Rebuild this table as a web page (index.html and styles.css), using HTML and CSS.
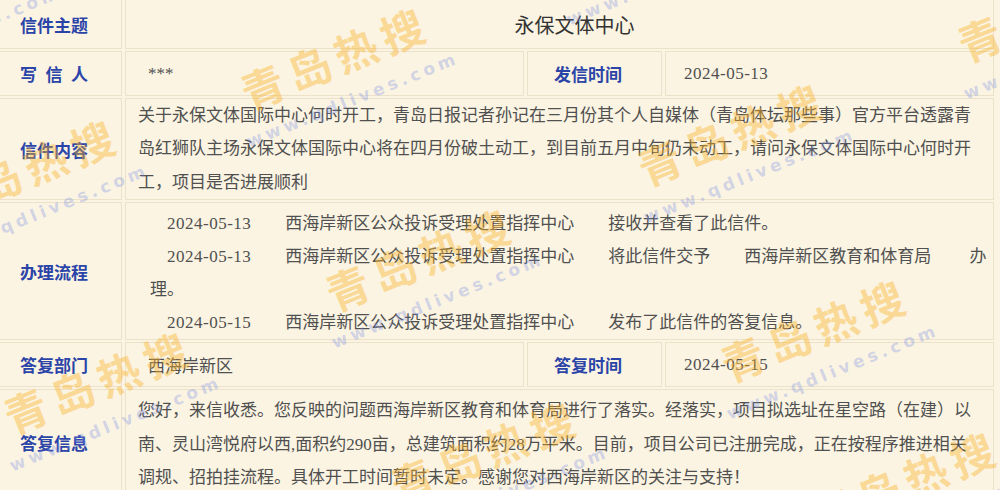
FILE: index.html
```html
<!DOCTYPE html>
<html lang="zh-CN">
<head>
<meta charset="utf-8">
<title>信件详情</title>
<link rel="stylesheet" href="styles.css">
</head>
<body>
<div class="page">
  <table class="letter">
    <colgroup>
      <col class="c-label">
      <col class="c-value">
      <col class="c-label2">
      <col class="c-value2">
    </colgroup>
    <tr class="row-title">
      <th><span class="lbl">信件主题</span></th>
      <td colspan="3" class="title">永保文体中心</td>
    </tr>
    <tr class="row-short">
      <th><span class="lbl">写 信 人</span></th>
      <td class="val">***</td>
      <th><span class="lbl">发信时间</span></th>
      <td class="val-r"><span class="date">2024-05-13</span></td>
    </tr>
    <tr>
      <th><span class="lbl">信件内容</span></th>
      <td colspan="3" class="body">关于永保文体国际中心何时开工，青岛日报记者孙记在三月份其个人自媒体（青岛体坛那些事）官方平台透露青岛红狮队主场永保文体国际中心将在四月份破土动工，到目前五月中旬仍未动工，请问永保文体国际中心何时开工，项目是否进展顺利</td>
    </tr>
    <tr>
      <th><span class="lbl">办理流程</span></th>
      <td colspan="3" class="flow">
        <p>　<span class="date">2024-05-13</span>　　西海岸新区公众投诉受理处置指挥中心　　接收并查看了此信件。</p>
        <p>　<span class="date">2024-05-13</span>　　西海岸新区公众投诉受理处置指挥中心　　将此信件交予　　西海岸新区教育和体育局　　 办理。</p>
        <p>　<span class="date">2024-05-15</span>　　西海岸新区公众投诉受理处置指挥中心　　发布了此信件的答复信息。</p>
      </td>
    </tr>
    <tr class="row-short">
      <th><span class="lbl">答复部门</span></th>
      <td class="val">西海岸新区</td>
      <th><span class="lbl">答复时间</span></th>
      <td class="val-r"><span class="date">2024-05-15</span></td>
    </tr>
    <tr>
      <th><span class="lbl">答复信息</span></th>
      <td colspan="3" class="body reply">您好，来信收悉。您反映的问题西海岸新区教育和体育局进行了落实。经落实，项目拟选址在星空路（在建）以南、灵山湾悦府以西,面积约290亩，总建筑面积约28万平米。目前，项目公司已注册完成，正在按程序推进相关调规、招拍挂流程。具体开工时间暂时未定。感谢您对西海岸新区的关注与支持！</td>
    </tr>
  </table>

  <div class="watermarks" aria-hidden="true">
    <div class="wm wm-1"><span class="cn">青岛热搜</span><span class="en">www.qdlives.com</span></div>
    <div class="wm wm-2"><span class="cn">青岛热搜</span><span class="en">www.qdlives.com</span></div>
    <div class="wm wm-3"><span class="cn">青岛热搜</span><span class="en">www.qdlives.com</span></div>
    <div class="wm wm-4"><span class="cn">青岛热搜</span><span class="en">www.qdlives.com</span></div>
    <div class="wm wm-5"><span class="cn">青岛热搜</span><span class="en">www.qdlives.com</span></div>
    <div class="wm wm-6"><span class="cn">青岛热搜</span><span class="en">www.qdlives.com</span></div>
    <div class="wm wm-7"><span class="cn">青岛热搜</span><span class="en">www.qdlives.com</span></div>
    <div class="wm wm-8"><span class="cn">青岛热搜</span><span class="en">www.qdlives.com</span></div>
    <div class="wm wm-9"><span class="cn">青岛热搜</span><span class="en">www.qdlives.com</span></div>
    <div class="wm wm-10"><span class="cn">青岛热搜</span><span class="en">www.qdlives.com</span></div>
    <div class="wm wm-11"><span class="cn">青岛热搜</span><span class="en">www.qdlives.com</span></div>
  </div>
</div>
</body>
</html>
```

FILE: styles.css
```css
html, body {
  margin: 0;
  padding: 0;
  background: #fbf4e2;
}

body {
  font-family: "Liberation Serif", "Noto Sans CJK SC", serif;
  font-size: 17px;
  color: #505050;
  text-spacing-trim: space-all;
}

.page {
  position: relative;
  width: 1000px;
  height: 490px;
  overflow: hidden;
}

/* ---------- table ---------- */
.letter {
  border-collapse: separate;
  border-spacing: 3px 2px;
  table-layout: fixed;
  width: 1001px;
  margin: -3px 0 0 -4px;
}

.c-label { width: 123px; }
.c-value { width: 399px; }
.c-label2 { width: 135px; }
.c-value2 { width: 329px; }

.letter th,
.letter td {
  border: 1px solid #ece2c9;
  padding: 0;
  vertical-align: middle;
  background: #fbf4e2;
}

.letter th {
  color: #2b44a8;
  font-family: "Noto Sans CJK SC", sans-serif;
  font-weight: bold;
  text-align: center;
  padding-right: 13px;
}

.lbl {
  display: inline-block;
  width: 68px;
  text-align: justify;
  text-align-last: justify;
}

.row-title { height: 50px; }
.row-short { height: 45px; }

.letter .title {
  text-align: center;
  padding-left: 30px;
  font-size: 20px;
  color: #333;
}

.letter .val {
  padding-left: 22px;
}

.letter .val-r {
  padding-left: 18px;
}

.date {
  letter-spacing: 0.5px;
}

.letter .body {
  padding: 0 15px 0 12px;
  line-height: 33.4px;
}

.letter .reply {
  padding-top: 4px;
}

.letter .flow {
  padding: 4px 0 0 24px;
  line-height: 33px;
}

.flow p {
  margin: 0;
}

/* ---------- watermarks ---------- */
.watermarks {
  position: absolute;
  inset: 0;
  pointer-events: none;
  overflow: hidden;
}

.wm {
  position: absolute;
  width: 240px;
  display: flex;
  flex-direction: column;
  align-items: center;
  transform-origin: 120px 25px;
  transform: rotate(-22deg);
}

.wm .cn {
  font-family: "Noto Sans CJK SC", sans-serif;
  font-weight: bold;
  font-size: 43px;
  line-height: 50px;
  letter-spacing: 7px;
  color: rgba(250, 178, 40, 0.42);
  white-space: nowrap;
}

.wm .en {
  margin-top: 12px;
  font-family: "DejaVu Sans", sans-serif;
  font-weight: bold;
  font-size: 17px;
  line-height: 20px;
  letter-spacing: 4px;
  color: rgba(120, 140, 230, 0.33);
  white-space: nowrap;
}

/* tile positions: left = cx - 120, top = cy - 25 */
.wm-1  { left: 215px;  top: 31px; }
.wm-2  { left: 612px;  top: 107px; }
.wm-3  { left: 932px;  top: -17px; }
.wm-4  { left: -95px;  top: 143px; }
.wm-5  { left: 300px;  top: 232px; }
.wm-6  { left: 695px;  top: 303px; }
.wm-7  { left: -22px;  top: 355px; }
.wm-8  { left: 785px;  top: 455px; }
.wm-9  { left: 365px;  top: 425px; }
.wm-10 { left: 535px;  top: -91px; }
.wm-11 { left: -182px; top: -35px; }
```
